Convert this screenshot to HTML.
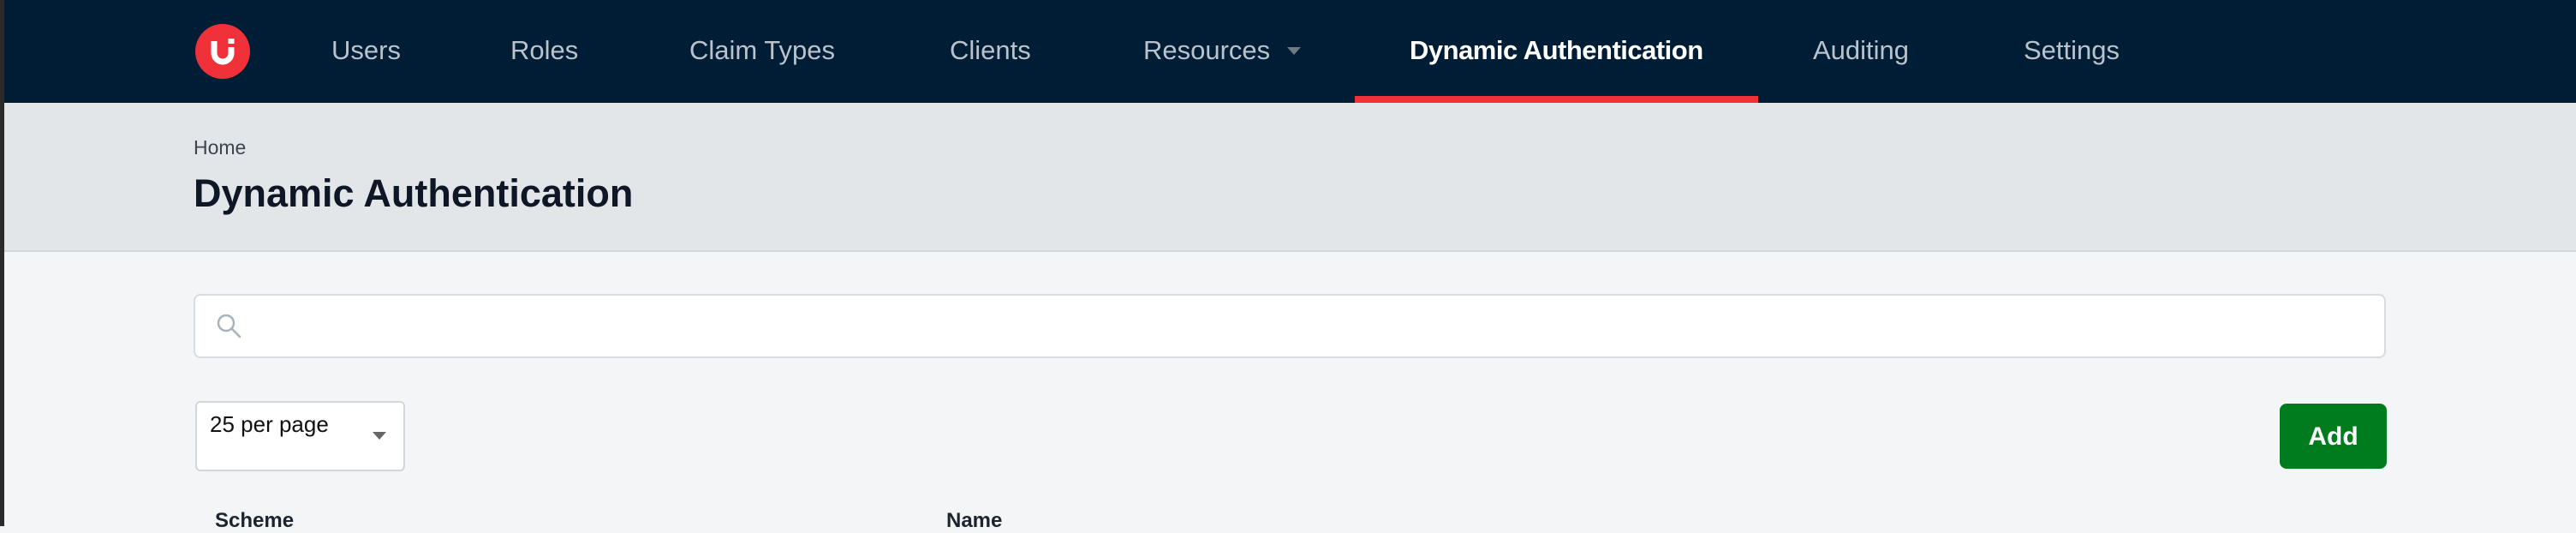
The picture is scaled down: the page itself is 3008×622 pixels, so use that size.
<!DOCTYPE html>
<html><head><meta charset="utf-8"><style>
*{margin:0;padding:0;box-sizing:border-box}
body{width:3008px;height:614px;overflow:hidden;background:#f4f5f7;font-family:"Liberation Sans",Arial,sans-serif;position:relative}
.strip{position:absolute;left:0;top:0;width:5px;height:614px;background:#2b2b2b;z-index:5}
.nav{position:absolute;left:0;top:0;width:3008px;height:120px;background:#001d36}
.nav span{position:absolute;top:41px;font-size:31px;line-height:36px;color:#bac2cc;white-space:nowrap}
.nav .act{color:#fff;font-weight:bold;letter-spacing:-0.5px}
.ul{position:absolute;left:1582px;top:112px;width:471px;height:8px;background:#f0313a}
.logo{position:absolute;left:228px;top:28px;width:64px;height:64px;border-radius:50%;background:#f0313a}
.hdr{position:absolute;left:0;top:120px;width:3008px;height:174px;background:#e2e6e9;border-bottom:2px solid #d0d6dc}
.home{position:absolute;left:226px;top:159px;font-size:23px;color:#3d4450}
.title{position:absolute;left:226px;top:200px;font-size:45px;font-weight:bold;color:#0d1726;letter-spacing:0px}
.search{position:absolute;left:226px;top:343px;width:2560px;height:75px;background:#fff;border:2px solid #d6dce1;border-radius:8px}
.sel{position:absolute;left:228px;top:468px;width:245px;height:82px;background:#fff;border:2px solid #d0d6dc;border-radius:6px}
.sel span{position:absolute;left:15px;top:10px;font-size:26px;color:#111}
.sel i{position:absolute;left:205px;top:34px;border-left:8px solid transparent;border-right:8px solid transparent;border-top:9px solid #666}
.add{position:absolute;left:2662px;top:471px;width:125px;height:76px;background:#007c1f;border-radius:8px;color:#fff;font-weight:bold;font-size:30px;text-align:center;line-height:78px}
.th{position:absolute;top:594px;font-size:24px;font-weight:bold;color:#1c2430}
</style></head><body>
<div class="strip"></div>
<div class="nav">
<div class="logo"><svg width="64" height="64" viewBox="0 0 64 64"><path d="M22 20v14a10 10 0 0 0 20 0V27" fill="none" stroke="#fff" stroke-width="7"/><rect x="38.5" y="17" width="7" height="6" fill="#fff"/></svg></div>
<span style="left:387px">Users</span>
<span style="left:596px">Roles</span>
<span style="left:805px">Claim Types</span>
<span style="left:1109px">Clients</span>
<span style="left:1335px">Resources</span>
<svg style="position:absolute;left:1503px;top:55px" width="16" height="10"><path d="M0 0h16L8 9z" fill="#6d7986"/></svg>
<span class="act" style="left:1646px">Dynamic Authentication</span>
<span style="left:2117px">Auditing</span>
<span style="left:2363px">Settings</span>
<div class="ul"></div>
</div>
<div class="hdr"></div>
<div class="home">Home</div>
<div class="title">Dynamic Authentication</div>
<div class="search"><svg style="position:absolute;left:24px;top:20px" width="32" height="32" viewBox="0 0 32 32"><circle cx="12" cy="12" r="9" fill="none" stroke="#a9b2bc" stroke-width="2.5"/><path d="M18.5 18.5L28 28" stroke="#a9b2bc" stroke-width="2.5" stroke-linecap="round"/></svg></div>
<div class="sel"><span>25 per page</span><i></i></div>
<div class="add">Add</div>
<div class="th" style="left:251px">Scheme</div>
<div class="th" style="left:1105px">Name</div>
</body></html>
